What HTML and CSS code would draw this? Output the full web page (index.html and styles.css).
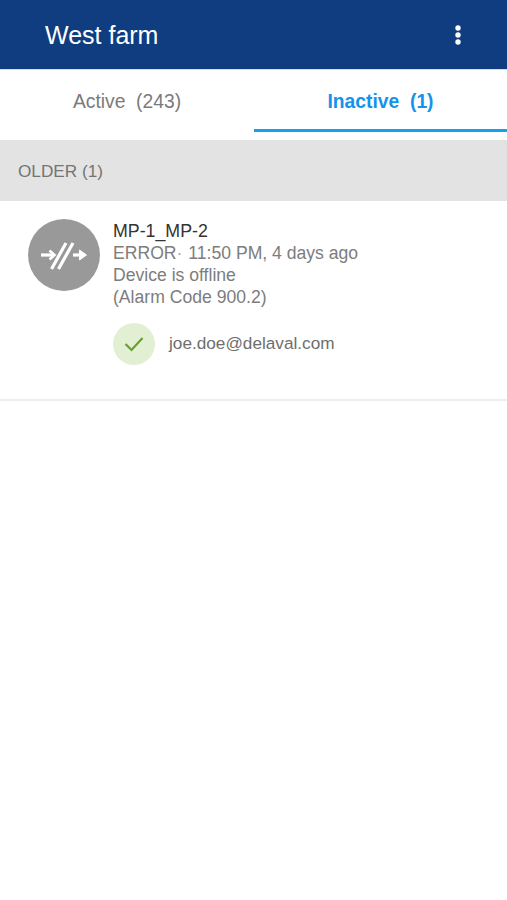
FILE: index.html
```html
<!DOCTYPE html>
<html lang="en">
<head>
<meta charset="utf-8">
<title>West farm</title>
<link rel="stylesheet" href="styles.css">
</head>
<body>
<header class="appbar">
  <h1 class="appbar-title">West farm</h1>
  <svg class="menu-icon" width="8" height="22" viewBox="0 0 8 22" aria-label="More">
    <circle cx="4" cy="4" r="2.7"/>
    <circle cx="4" cy="11" r="2.7"/>
    <circle cx="4" cy="18" r="2.7"/>
  </svg>
</header>
<nav class="tabs">
  <div class="tab">Active  (243)</div>
  <div class="tab tab-active">Inactive  (1)</div>
</nav>
<div class="section-head">OLDER (1)</div>
<article class="alarm">
  <div class="alarm-icon">
    <svg width="48" height="36" viewBox="0 0 48 36" fill="none" stroke="#fff">
      <path d="M1 18H13" stroke-width="3.200"/>
      <path d="M9.500 13.500 14.500 18 9.500 22.500" stroke-width="2.600"/>
      <path d="M11.500 32 26 6" stroke-width="3.200"/>
      <path d="M18.500 32 33 6" stroke-width="3.200"/>
      <path d="M33 18H41" stroke-width="3.200"/>
      <path d="M39.500 13 46.500 18 39.500 23Z" fill="#fff" stroke-width="1"/>
    </svg>
  </div>
  <div class="alarm-body">
    <div class="alarm-name">MP-1_MP-2</div>
    <div class="alarm-line">ERROR<span class="dot">·</span> 11:50 PM, 4 days ago</div>
    <div class="alarm-line">Device is offline</div>
    <div class="alarm-line">(Alarm Code 900.2)</div>
    <div class="ack">
      <div class="ack-badge">
        <svg width="20" height="16" viewBox="0 0 20 16" fill="none" stroke="#62a32e" stroke-width="2.200">
          <path d="M1.500 8 7.500 14 18.500 2"/>
        </svg>
      </div>
      <span class="ack-user">joe.doe@delaval.com</span>
    </div>
  </div>
</article>
```

FILE: styles.css
```css
* {
  box-sizing: border-box;
}

html,
body {
  margin: 0;
  background: #fff;
}

body {
  font-family: "Liberation Sans", Arial, sans-serif;
  color: #6f6f6f;
}

.appbar {
  height: 70px;
  background: #0f3d80;
  border-bottom: 1px solid #cfe0f2;
  display: flex;
  align-items: center;
  justify-content: space-between;
  padding: 1px 45px 0 45px;
}

.appbar-title {
  margin: 0;
  font-size: 25px;
  font-weight: 400;
  color: #fff;
}

.menu-icon {
  fill: #fff;
}

.tabs {
  height: 70px;
  display: grid;
  grid-template-columns: 254px 253px;
}

.tab {
  display: flex;
  align-items: center;
  justify-content: center;
  white-space: pre;
  font-size: 19.300px;
  color: #7b7b7b;
  padding-bottom: 7px;
}

.tab-active {
  color: #1592ea;
  font-weight: 700;
  border-bottom: 3px solid #14a0ec;
  margin-bottom: 8px;
  padding: 4px 0 0;
}

.section-head {
  height: 61px;
  background: #e3e3e3;
  display: flex;
  align-items: center;
  padding: 2px 0 0 18px;
  font-size: 17.200px;
  color: #747474;
}

.alarm {
  display: flex;
  height: 200px;
  border-bottom: 2px solid #eeeeee;
  padding: 18px 0 0 28px;
}

.alarm-icon {
  width: 72px;
  height: 72px;
  border-radius: 50%;
  background: #999;
  display: flex;
  align-items: center;
  justify-content: center;
  flex-shrink: 0;
}

.alarm-body {
  margin-left: 13px;
  padding-top: 1px;
}

.alarm-name,
.alarm-line {
  line-height: 22px;
}

.alarm-name {
  font-size: 17.800px;
  color: #333;
}

.alarm-line {
  font-size: 17.600px;
  color: #7d7d7d;
}

.dot {
  color: #aaa;
  margin-right: 1px;
}

.ack {
  display: flex;
  align-items: center;
  margin-top: 15px;
}

.ack-badge {
  width: 42px;
  height: 42px;
  border-radius: 50%;
  background: #e3efd3;
  display: flex;
  align-items: center;
  justify-content: center;
}

.ack-user {
  margin-left: 14px;
  padding-bottom: 2px;
  font-size: 17.200px;
  color: #6e6e6e;
}
```
